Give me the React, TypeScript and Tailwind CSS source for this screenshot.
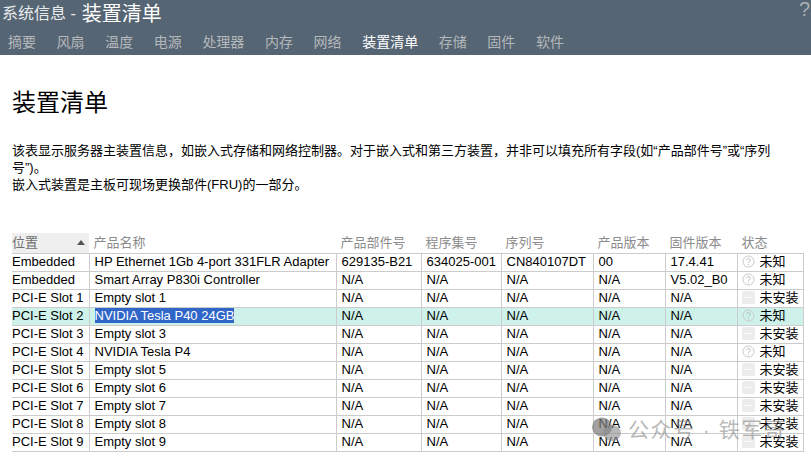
const tabs = ["摘要", "风扇", "温度", "电源", "处理器", "内存", "网络", "装置清单", "存储", "固件", "软件"];

const columns = [
  { label: "产品名称", width: "w-[247px]" },
  { label: "产品部件号", width: "w-[85px]" },
  { label: "程序集号", width: "w-[80px]" },
  { label: "序列号", width: "w-[92px]" },
  { label: "产品版本", width: "w-[72px]" },
  { label: "固件版本", width: "w-[72px]" },
  { label: "状态", width: "w-[66px]" },
];

const rows = [
  ["Embedded", "HP Ethernet 1Gb 4-port 331FLR Adapter", "629135-B21", "634025-001", "CN840107DT", "00", "17.4.41", "未知"],
  ["Embedded", "Smart Array P830i Controller", "N/A", "N/A", "N/A", "N/A", "V5.02_B0", "未知"],
  ["PCI-E Slot 1", "Empty slot 1", "N/A", "N/A", "N/A", "N/A", "N/A", "未安装"],
  ["PCI-E Slot 2", "NVIDIA Tesla P40 24GB", "N/A", "N/A", "N/A", "N/A", "N/A", "未知"],
  ["PCI-E Slot 3", "Empty slot 3", "N/A", "N/A", "N/A", "N/A", "N/A", "未安装"],
  ["PCI-E Slot 4", "NVIDIA Tesla P4", "N/A", "N/A", "N/A", "N/A", "N/A", "未知"],
  ["PCI-E Slot 5", "Empty slot 5", "N/A", "N/A", "N/A", "N/A", "N/A", "未安装"],
  ["PCI-E Slot 6", "Empty slot 6", "N/A", "N/A", "N/A", "N/A", "N/A", "未安装"],
  ["PCI-E Slot 7", "Empty slot 7", "N/A", "N/A", "N/A", "N/A", "N/A", "未安装"],
  ["PCI-E Slot 8", "Empty slot 8", "N/A", "N/A", "N/A", "N/A", "N/A", "未安装"],
  ["PCI-E Slot 9", "Empty slot 9", "N/A", "N/A", "N/A", "N/A", "N/A", "未安装"],
];

function StatusIcon({ status }: { status: string }) {
  if (status === "未知") {
    return (
      <svg width="13" height="13" viewBox="0 0 13 13" className="relative top-[-1px] shrink-0">
        <circle cx="6.5" cy="6.5" r="5.5" fill="none" stroke="#c8c8c8" strokeWidth="1" />
        <path d="M4.8 5.2a1.7 1.7 0 1 1 2.6 1.4c-.6.4-.9.7-.9 1.3" fill="none" stroke="#b8b8b8" strokeWidth="1" />
        <circle cx="6.5" cy="9.6" r=".6" fill="#b8b8b8" />
      </svg>
    );
  }
  return (
    <span className="relative top-[-1px] flex h-[13px] w-[13px] shrink-0 items-center justify-center rounded-[2px] bg-[#ececec]">
      <span className="h-px w-[7px] bg-white" />
    </span>
  );
}

export default function App() {
  return (
    <div className="relative h-[459px] w-[811px] overflow-hidden bg-white font-['Liberation_Sans','Noto_Sans_CJK_SC',sans-serif] text-[13px] text-black">
      {/* Header */}
      <div className="relative h-[55px] bg-[#566573] pl-[2px]">
        <div className="flex h-[28px] items-center whitespace-nowrap text-[#e8ebed]">
          <span className="text-[16px]">系统信息 -</span>
          <span className="ml-[6px] text-[20px] text-white">装置清单</span>
        </div>
        <div className="mt-[1px] flex gap-[20.6px] pl-[6px] text-[14px] leading-[26px] text-[#b4b8bb]">
          {tabs.map((tab) => (
            <span key={tab} className={tab === "装置清单" ? "text-white" : ""}>
              {tab}
            </span>
          ))}
        </div>
        <span className="absolute right-[1px] top-[-6px] text-[20px] text-[#a9b0b6]">?</span>
      </div>

      <div className="px-[12px]">
        <h1 className="mt-[33px] text-[24px] leading-[30px] font-normal">装置清单</h1>

        <p className="mt-[24px] w-[770px] text-[13px] leading-[17px]">
          该表显示服务器主装置信息，如嵌入式存储和网络控制器。对于嵌入式和第三方装置，并非可以填充所有字段(如“产品部件号”或“序列号”)。
          <br />
          嵌入式装置是主板可现场更换部件(FRU)的一部分。
        </p>

        {/* Device table */}
        <table className="mt-[40px] w-[791px] table-fixed border-collapse">
          <thead>
            <tr className="h-[19px] text-left text-[13px] text-[#8c8c8c]">
              <th className="w-[77px] bg-[#efefef] p-0 font-normal text-[#6e6e6e]">
                <div className="flex items-center justify-between pr-[4px]">
                  位置
                  <span className="h-0 w-0 border-x-[4px] border-b-[5px] border-x-transparent border-b-[#555]" />
                </div>
              </th>
              {columns.map((col) => (
                <th key={col.label} className={`${col.width} p-0 pl-[4.5px] font-normal`}>
                  {col.label}
                </th>
              ))}
            </tr>
          </thead>
          <tbody>
            {rows.map((row) => (
              <tr key={row[0] + row[1]} className={`h-[18px] ${row[0] === "PCI-E Slot 2" ? "bg-[#cef2ea]" : ""}`}>
                {row.map((cell, i) => {
                  if (i === 0) {
                    return (
                      <td key={i} className="border-y border-[#cccccc] p-0 align-top leading-[15px] whitespace-nowrap">
                        {cell}
                      </td>
                    );
                  }
                  if (i === 7) {
                    return (
                      <td key={i} className="border border-[#cccccc] p-0 pl-[4px] whitespace-nowrap">
                        <div className="flex h-[17px] items-center gap-[5px]">
                          <StatusIcon status={cell} />
                          <span>{cell}</span>
                        </div>
                      </td>
                    );
                  }
                  return (
                    <td key={i} className="border border-[#cccccc] p-0 pl-[5px] align-top leading-[15px] whitespace-nowrap">
                      {cell === "NVIDIA Tesla P40 24GB" ? (
                        <span className="bg-[#2f66c8] text-white">{cell}</span>
                      ) : (
                        cell
                      )}
                    </td>
                  );
                })}
              </tr>
            ))}
          </tbody>
        </table>
      </div>

      {/* Watermark */}
      <div className="absolute left-[591px] top-[414px] flex items-center gap-[6px] text-[21px] tracking-[1.5px] whitespace-nowrap text-[#8a8a8a]/60">
        <svg width="31" height="26" viewBox="0 0 31 26">
          <ellipse cx="11" cy="10" rx="10" ry="9.5" fill="#777" fillOpacity=".7" />
          <ellipse cx="21" cy="16" rx="9" ry="8" fill="#888" fillOpacity=".6" />
        </svg>
        <span>公众号 · 铁军哥</span>
      </div>
    </div>
  );
}
